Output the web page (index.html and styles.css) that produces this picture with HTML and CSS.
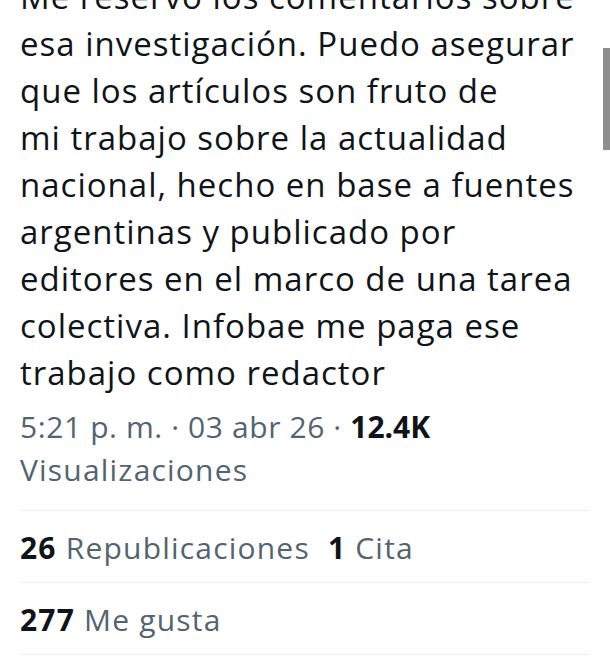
FILE: index.html
```html
<!DOCTYPE html>
<html lang="es">
<head>
  <meta charset="UTF-8">
  <meta name="viewport" content="width=device-width, initial-scale=1.0">
  <title>Post</title>
  <link rel="stylesheet" href="styles.css">
</head>
<body>
  <div class="post">
    <p class="post-text">Me reservo los comentarios sobre<br>esa investigación. Puedo asegurar<br>que los artículos son fruto de<br>mi trabajo sobre la actualidad<br>nacional, hecho en base a fuentes<br>argentinas y publicado por<br>editores en el marco de una tarea<br>colectiva. Infobae me paga ese<br>trabajo como redactor</p>
    <div class="post-meta">
      <span class="meta-time">5:21 p. m. · 03 abr 26 · <strong>12.4K</strong></span><br>
      <span>Visualizaciones</span>
    </div>
    <div class="stats-row">
      <span class="stat"><strong>26</strong> Republicaciones</span>
      <span class="stat"><strong>1</strong> Cita</span>
    </div>
    <div class="stats-row last">
      <span class="stat"><strong>277</strong> Me gusta</span>
    </div>
  </div>
  <div class="scroll-thumb"></div>
</body>
</html>
```

FILE: styles.css
```css
body {
  margin: 0;
  padding: 0;
  background: #fff;
  font-family: "Open Sans", "Noto Sans", sans-serif;
  color: #0f1419;
  overflow: hidden;
}
.post {
  padding: 0 20px;
}
.post-text {
  margin: -27px 0 0;
  font-size: 33px;
  line-height: 47px;
  letter-spacing: 1px;
  white-space: nowrap;
}
.post-meta {
  margin-top: 9px;
  padding-bottom: 19px;
  font-size: 30px;
  line-height: 43px;
  letter-spacing: 1.2px;
  color: #536471;
}
.meta-time {
  letter-spacing: 0.6px;
}
.post-meta strong {
  color: #0f1419;
  font-weight: 700;
  letter-spacing: 0;
}
.stats-row {
  display: flex;
  gap: 18px;
  border-top: 1px solid #eceff1;
  padding: 15px 0 13px;
  font-size: 30px;
  line-height: 43px;
  letter-spacing: 1.2px;
  color: #536471;
}
.stats-row.last {
  border-bottom: 1px solid #eceff1;
}
.stat strong {
  color: #0f1419;
  font-weight: 700;
}
.scroll-thumb {
  position: absolute;
  top: 48px;
  right: 0;
  width: 7px;
  height: 102px;
  background: #8e8e8e;
}
```
